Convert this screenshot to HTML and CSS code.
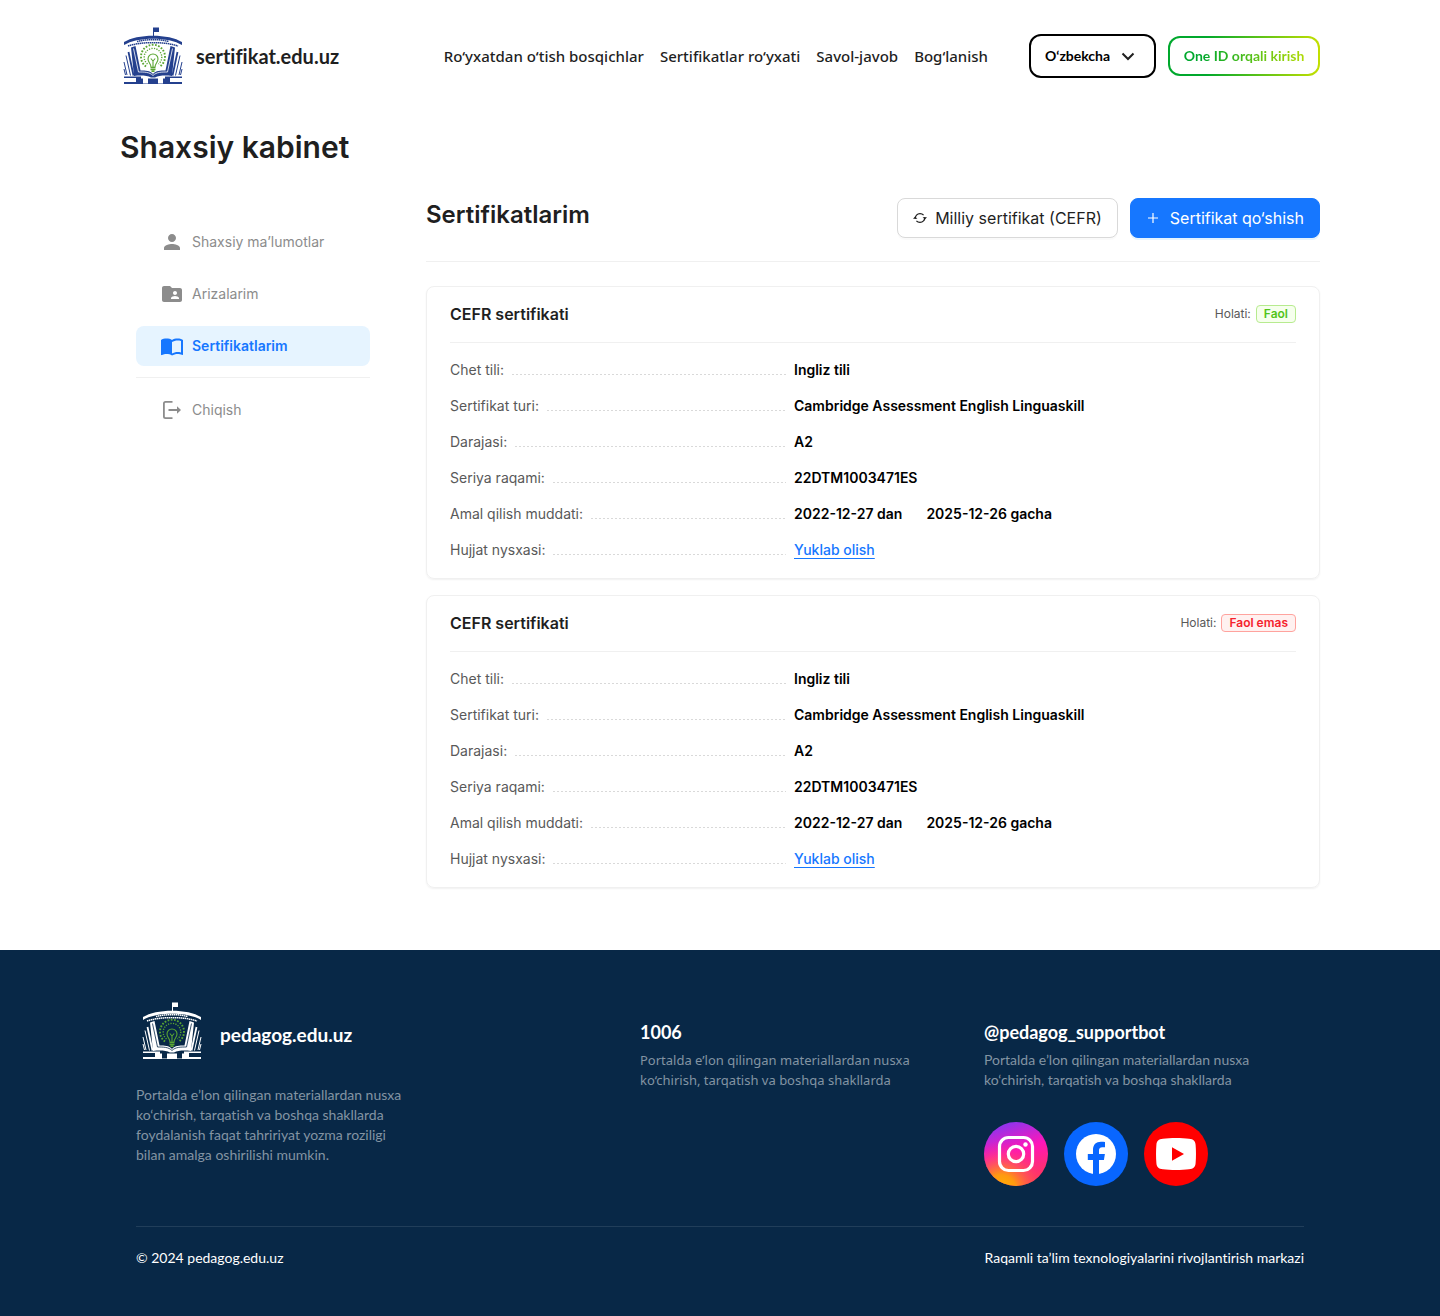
FILE: index.html
```
<!DOCTYPE html>
<html lang="uz">
<head>
<meta charset="utf-8">
<meta name="viewport" content="width=device-width, initial-scale=1">
<title>Shaxsiy kabinet – sertifikat.edu.uz</title>
<link rel="stylesheet" href="styles.css">
</head>
<body>
<svg class="sprite" aria-hidden="true">
  <symbol id="emblem" viewBox="0 0 60 60">
    <path fill="currentColor" d="M30 1.500h6v4.500h-5v4h-1z"/>
    <path fill="currentColor" d="M1 16C14 7.500 46 7.500 59 16v3C46 10.500 14 10.500 1 19z"/>
    <path fill="none" stroke="currentColor" stroke-width="1.500" stroke-dasharray="1.500 .5" d="M14 15.500C24 13 36 13 46 15.500M5 20C18 15.500 42 15.500 55 20"/>
    <path fill="currentColor" d="M8 21.500l4.500-1.500 5 24.500c5 0 9.500 0 12.500 3.500 3-3.500 7.500-3.500 12.500-3.500l5-24.500 4.500 1.500L49 50c-7-1-13-.5-17 1.500h-4C24 49.500 18 49 11 50z"/>
    <path fill="none" stroke="var(--paper)" stroke-width=".8" d="M10.500 22.500L15.500 46c6 0 11 0 14.500 3.500M49.500 22.500L44.500 46C38.500 46 33.500 46 30 49.500"/>
    <path fill="none" stroke="currentColor" stroke-width="1.800" d="M5.500 26l5 23.500M54.500 26l-5 23.500"/>
    <path fill="none" stroke="currentColor" stroke-width="1" d="M3 29.500l4.500 20M57 29.500l-4.500 20M1 36l3 13M59 36l-3 13M1 43l1.500 6M59 43l-1.500 6"/>
    <path fill="currentColor" d="M1 50.500h17v2h2v5h5v-5h10v5h5v-5h2v-2h17v1.500H47v4h12v2H1v-2h12v-4H1zM27 54h6v3.500h-6z"/>
    <g fill="none" stroke="#5aa532">
      <path stroke-width="1.900" stroke-dasharray="1.700 1.500" d="M23 40.500a12 12 0 1 1 14 0"/>
      <path stroke-width="1.400" stroke-dasharray="1.200 1.300" d="M24.500 38a8.800 8.800 0 1 1 11 0"/>
      <path stroke-width="1.100" d="M28 41c0-3.500-3-4.500-3-8a5 5 0 0 1 10 0c0 3.500-3 4.500-3 8M30 41v-7m0 1l-2.200-2.500M30 35l2.200-2.500"/>
      <path stroke-width="1.400" d="M27.500 41.500h5M27.500 43.500h5M28.500 45.300h3"/>
    </g>
  </symbol>
</svg>

<header class="header wrap">
  <a class="brand" href="#">
    <svg class="emblem" aria-hidden="true"><use href="#emblem"/></svg>
    <span class="brand-name">sertifikat.edu.uz</span>
  </a>
  <nav class="nav" aria-label="Asosiy menyu">
    <a href="#">Ro‘yxatdan o‘tish bosqichlar</a>
    <a href="#">Sertifikatlar ro‘yxati</a>
    <a href="#">Savol-javob</a>
    <a href="#">Bog‘lanish</a>
  </nav>
  <div class="header-actions">
    <div class="lang">
      <select class="lang-select" aria-label="Til">
        <option>O‘zbekcha</option>
      </select>
      <svg class="lang-chevron" viewBox="0 0 24 24" aria-hidden="true"><path d="M6.500 9.500l5.500 5.500 5.500-5.500" fill="none" stroke="currentColor" stroke-width="2"/></svg>
    </div>
    <button class="login" type="button"><span>One ID orqali kirish</span></button>
  </div>
</header>

<main class="wrap">
  <h1 class="page-title">Shaxsiy kabinet</h1>
  <div class="layout">
    <aside class="sidebar">
      <nav class="menu" aria-label="Kabinet">
        <a class="menu-item" href="#">
          <svg viewBox="0 0 24 24" aria-hidden="true"><path d="M12 12c2.210 0 4-1.790 4-4s-1.790-4-4-4-4 1.790-4 4 1.790 4 4 4zm0 2c-2.670 0-8 1.340-8 4v2h16v-2c0-2.660-5.330-4-8-4z"/></svg>
          Shaxsiy ma’lumotlar
        </a>
        <a class="menu-item" href="#">
          <svg viewBox="0 0 24 24" aria-hidden="true"><path d="M20 6h-8l-2-2H4c-1.100 0-2 .9-2 2v12c0 1.100.9 2 2 2h16c1.100 0 2-.9 2-2V8c0-1.100-.9-2-2-2zm-5 3c1.100 0 2 .9 2 2s-.9 2-2 2-2-.9-2-2 .9-2 2-2zm4 8h-8v-1c0-1.330 2.670-2 4-2s4 .67 4 2v1z"/></svg>
          Arizalarim
        </a>
        <a class="menu-item active" href="#" aria-current="page">
          <svg viewBox="0 0 24 24" aria-hidden="true"><path d="M21 5c-1.110-.35-2.330-.5-3.500-.5-1.950 0-4.050.4-5.500 1.500-1.450-1.100-3.550-1.500-5.500-1.500S2.450 4.900 1 6v14.650c0 .25.25.5.5.5.1 0 .15-.05.250-.05C3.100 20.450 5.050 20 6.500 20c1.950 0 4.050.4 5.500 1.500 1.350-.85 3.800-1.500 5.500-1.500 1.650 0 3.350.3 4.750 1.050.1.050.15.050.250.050.25 0 .5-.25.5-.5V6c-.6-.45-1.250-.75-2-1zm0 13.500c-1.100-.35-2.300-.5-3.500-.5-1.700 0-4.150.650-5.500 1.500V8c1.350-.85 3.800-1.500 5.500-1.500 1.200 0 2.400.15 3.500.5v11.500z"/></svg>
          Sertifikatlarim
        </a>
        <hr class="rule">
        <a class="menu-item" href="#">
          <svg viewBox="0 0 24 24" aria-hidden="true"><path d="M12.500 3.800H5.500c-1 0-1.600.6-1.600 1.600v13.200c0 1 .6 1.600 1.600 1.600h7M8.500 12H19" fill="none" stroke="currentColor" stroke-width="1.800"/><path d="M17 8.300l4 3.700-4 3.700z"/></svg>
          Chiqish
        </a>
      </nav>
    </aside>

    <section class="content">
      <div class="content-head">
        <h2 class="content-title">Sertifikatlarim</h2>
        <div class="buttons">
          <button class="btn" type="button">
            <svg viewBox="0 0 14 14" aria-hidden="true"><path d="M2.300 7.800C2 4.800 4.200 2.600 7 2.600c1.500 0 2.700.5 3.600 1.500M11.700 6.200c.3 3-1.900 5.200-4.700 5.200-1.500 0-2.700-.5-3.600-1.500" fill="none" stroke="currentColor" stroke-width="1.200"/><path fill="currentColor" d="M0 7.800L2.100 5.600l2.300 2.200zM14 6.200l-2.100 2.200-2.300-2.200z"/></svg>
            Milliy sertifikat (CEFR)
          </button>
          <button class="btn primary" type="button">
            <svg viewBox="0 0 14 14" aria-hidden="true"><path d="M7 2v10M2 7h10" stroke="currentColor" stroke-width="1.200"/></svg>
            Sertifikat qo‘shish
          </button>
        </div>
      </div>

      <article class="card">
        <header class="card-head">
          <h3 class="card-title">CEFR sertifikati</h3>
          <p class="status">Holati: <span class="tag ok">Faol</span></p>
        </header>
        <dl class="fields">
          <div class="field"><dt>Chet tili:</dt><dd>Ingliz tili</dd></div>
          <div class="field"><dt>Sertifikat turi:</dt><dd>Cambridge Assessment English Linguaskill</dd></div>
          <div class="field"><dt>Darajasi:</dt><dd>A2</dd></div>
          <div class="field"><dt>Seriya raqami:</dt><dd>22DTM1003471ES</dd></div>
          <div class="field"><dt>Amal qilish muddati:</dt><dd><span>2022-12-27 dan</span><span>2025-12-26 gacha</span></dd></div>
          <div class="field"><dt>Hujjat nysxasi:</dt><dd><a class="download" href="#">Yuklab olish</a></dd></div>
        </dl>
      </article>

      <article class="card">
        <header class="card-head">
          <h3 class="card-title">CEFR sertifikati</h3>
          <p class="status">Holati: <span class="tag off">Faol emas</span></p>
        </header>
        <dl class="fields">
          <div class="field"><dt>Chet tili:</dt><dd>Ingliz tili</dd></div>
          <div class="field"><dt>Sertifikat turi:</dt><dd>Cambridge Assessment English Linguaskill</dd></div>
          <div class="field"><dt>Darajasi:</dt><dd>A2</dd></div>
          <div class="field"><dt>Seriya raqami:</dt><dd>22DTM1003471ES</dd></div>
          <div class="field"><dt>Amal qilish muddati:</dt><dd><span>2022-12-27 dan</span><span>2025-12-26 gacha</span></dd></div>
          <div class="field"><dt>Hujjat nysxasi:</dt><dd><a class="download" href="#">Yuklab olish</a></dd></div>
        </dl>
      </article>
    </section>
  </div>
</main>

<footer class="footer">
  <div class="footer-inner">
    <div class="footer-cols">
      <div class="footer-about">
        <a class="footer-brand" href="#">
          <svg class="emblem" aria-hidden="true"><use href="#emblem"/></svg>
          <span class="footer-name">pedagog.edu.uz</span>
        </a>
        <p class="note">Portalda e’lon qilingan materiallardan nusxa ko‘chirish, tarqatish va boshqa shakllarda foydalanish faqat tahririyat yozma roziligi bilan amalga oshirilishi mumkin.</p>
      </div>
      <div class="footer-col">
        <a class="contact" href="tel:1006">1006</a>
        <p class="note phone-note">Portalda e’lon qilingan materiallardan nusxa ko‘chirish, tarqatish va boshqa shakllarda</p>
      </div>
      <div class="footer-col">
        <a class="contact" href="#">@pedagog_supportbot</a>
        <p class="note">Portalda e’lon qilingan materiallardan nusxa ko‘chirish, tarqatish va boshqa shakllarda</p>
        <div class="socials">
          <a href="#" aria-label="Instagram">
            <svg viewBox="0 0 64 64" aria-hidden="true">
              <defs>
                <linearGradient id="ig-base" x1="0.350" y1="0" x2="0.650" y2="1"><stop offset="0" stop-color="#8a35f0"/><stop offset=".45" stop-color="#ff16b8"/><stop offset="1" stop-color="#ff3a50"/></linearGradient>
                <radialGradient id="ig-glow" cx=".27" cy="1.050" r=".75"><stop offset="0" stop-color="#ffb400"/><stop offset=".3" stop-color="#ff9a10"/><stop offset="1" stop-color="#ff1d90" stop-opacity="0"/></radialGradient>
              </defs>
              <circle cx="32" cy="32" r="32" fill="url(#ig-base)"/><circle cx="32" cy="32" r="32" fill="url(#ig-glow)"/>
              <rect x="15.500" y="15.500" width="33" height="33" rx="9" fill="none" stroke="#fff" stroke-width="3.200"/>
              <circle cx="32" cy="32" r="7.700" fill="none" stroke="#fff" stroke-width="3.200"/><circle cx="41.500" cy="22.500" r="2.200" fill="#fff"/>
            </svg>
          </a>
          <a href="#" aria-label="Facebook">
            <svg viewBox="0 0 64 64" aria-hidden="true"><circle cx="32" cy="32" r="32" fill="#0866ff"/><circle cx="32" cy="32" r="20" fill="#fff"/><path fill="#0866ff" d="M29 52.500V38h-5.200v-6H29v-4c0-5.600 3-8.300 8-8.300 1.500 0 3 .2 4 .4v5.100h-2.600c-2.700 0-3.400 1.300-3.400 3.300V32h5.900l-1 6H35v14.500z"/></svg>
          </a>
          <a href="#" aria-label="YouTube">
            <svg viewBox="0 0 64 64" aria-hidden="true"><circle cx="32" cy="32" r="32" fill="#f00"/><path fill="#fff" d="M19 16.700c7-.9 19-.9 26 0 4.500.5 6.200 2 6.600 6 .5 6 .5 12.600 0 18.600-.4 4-2.100 5.500-6.600 6-7 .9-19 .9-26 0-4.500-.5-6.200-2-6.600-6-.5-6-.5-12.600 0-18.600.4-4 2.100-5.500 6.600-6z"/><path fill="#f00" d="M28 25.300v13.400L40 32z"/></svg>
          </a>
        </div>
      </div>
    </div>
    <div class="footer-bottom">
      <p>© 2024 pedagog.edu.uz</p>
      <p>Raqamli ta’lim texnologiyalarini rivojlantirish markazi</p>
    </div>
  </div>
</footer>
</body>
</html>
```
FILE: styles.css
```
* { box-sizing: border-box; }

body {
  margin: 0;
  font-family: Inter, "Liberation Sans", sans-serif;
  font-size: 14px;
  line-height: 20px;
  color: #1f1f1f;
  background: #fff;
}

h1, h2, h3, p, dl, dd { margin: 0; }
h1, h2, h3 { font-weight: 600; }
a { color: inherit; text-decoration: none; }
button, select { font: inherit; cursor: pointer; }
svg { display: block; flex: none; }
.sprite { width: 0; height: 0; position: absolute; }

.wrap {
  max-width: 1240px;
  margin: 0 auto;
  padding: 0 20px;
}

/* Header */
.header, .footer {
  font-family: Lato, "Open Sans", sans-serif;
  font-variant-ligatures: none;
}
.header {
  display: flex;
  align-items: center;
  gap: 41px;
  height: 112px;
}
.brand {
  display: flex;
  align-items: center;
  gap: 13px;
  padding-left: 3px;
  margin-right: auto;
  color: #24408e;
  --paper: #fff;
}
.emblem { width: 60px; height: 60px; }
.brand-name {
  font-size: 20px;
  font-weight: 700;
  color: #1f1f1f;
}
.nav {
  display: flex;
  gap: 16px;
  font-family: "Noto Sans", "Open Sans", sans-serif;
  font-size: 15px;
  font-weight: 500;
}
.header-actions { display: flex; align-items: center; gap: 12px; }
.lang { display: grid; align-items: center; width: 127px; }
.lang-select {
  grid-area: 1 / 1;
  height: 44px;
  padding: 0 14px;
  border: 2px solid #000;
  border-radius: 12px;
  background: #fff;
  color: #000;
  font-weight: 700;
  appearance: none;
}
.lang-chevron {
  grid-area: 1 / 1;
  justify-self: end;
  width: 24px;
  height: 24px;
  margin-right: 16px;
  pointer-events: none;
}
.login {
  width: 152px;
  height: 40px;
  padding: 0;
  border: 2px solid transparent;
  border-radius: 12px;
  background:
    linear-gradient(#fff, #fff) padding-box,
    linear-gradient(90deg, #00a82d 25%, #c4e000) border-box;
  font-weight: 700;
}
.login span {
  background: linear-gradient(90deg, #00a82d 15%, #c4e000 110%);
  background-clip: text;
  color: transparent;
}

/* Cabinet */
.page-title {
  padding-top: 15px;
  font-size: 30px;
  line-height: 40px;
}
.layout {
  display: grid;
  grid-template-columns: 266px minmax(0, 1fr);
  gap: 40px;
  padding: 31px 0 62px;
}
.menu {
  display: flex;
  flex-direction: column;
  gap: 12px;
  padding: 24px 16px 0;
}
.menu-item {
  display: flex;
  align-items: center;
  gap: 8px;
  height: 40px;
  padding: 0 24px;
  border-radius: 8px;
  color: #8c8c8c;
}
.menu-item svg { width: 24px; height: 24px; fill: currentColor; }
.menu-item.active {
  background: #e6f4ff;
  color: #1677ff;
  font-weight: 600;
}
.rule {
  width: 100%;
  height: 1px;
  margin: -1px 0 0;
  border: 0;
  background: #f0f0f0;
}

.content { display: grid; gap: 16px; }
.content-head {
  display: flex;
  justify-content: space-between;
  align-items: start;
  padding-bottom: 23px;
  margin-bottom: 8px;
  border-bottom: 1px solid #f0f0f0;
}
.content-title { font-size: 24px; line-height: 34px; }
.buttons { display: flex; gap: 12px; }
.btn {
  display: flex;
  align-items: center;
  gap: 8px;
  height: 40px;
  padding: 0 15px;
  border: 1px solid #d9d9d9;
  border-radius: 8px;
  background: #fff;
  box-shadow: 0 2px 0 rgba(0, 0, 0, .02);
  color: #1f1f1f;
  font-size: 16px;
}
.btn svg { width: 14px; height: 14px; }
.btn.primary {
  gap: 10px;
  border-color: #1677ff;
  background: #1677ff;
  box-shadow: 0 2px 0 rgba(5, 145, 255, .1);
  color: #fff;
}

.card {
  padding: 0 23px 18px;
  border: 1px solid #f0f0f0;
  border-radius: 8px;
  box-shadow: 0 1px 2px rgba(0, 0, 0, .06);
}
.card-head {
  display: flex;
  justify-content: space-between;
  align-items: center;
  height: 56px;
  padding-bottom: 2px;
  border-bottom: 1px solid #f0f0f0;
}
.card-title { font-size: 16px; line-height: 24px; }
.status {
  display: flex;
  align-items: center;
  gap: 5px;
  font-size: 12px;
  color: #595959;
}
.tag {
  padding: 0 7px;
  border: 1px solid;
  border-radius: 4px;
  line-height: 16px;
  font-weight: 600;
}
.ok { border-color: #b7eb8f; background: #f6ffed; color: #52c41a; }
.off { border-color: #ffa39e; background: #fff1f0; color: #f5222d; }
.fields { display: grid; gap: 16px; padding-top: 17px; }
.field {
  display: grid;
  grid-template-columns: 336px minmax(0, 1fr);
  gap: 8px;
}
.field dt {
  display: flex;
  gap: 8px;
  color: #595959;
}
.field dt::after {
  content: "";
  flex: 1;
  height: 15px;
  background: repeating-linear-gradient(90deg, #d9d9d9 0 2px, transparent 2px 4px) bottom / 100% 1px no-repeat;
}
.field dd {
  display: flex;
  gap: 24px;
  font-weight: 600;
  color: #000;
}
.download {
  font-weight: 500;
  color: #1677ff;
  text-decoration: underline 1px;
  text-decoration-skip-ink: none;
  text-underline-offset: 3px;
}

/* Footer */
.footer { background: #082847; color: #fff; }
.footer-inner {
  max-width: 1208px;
  margin: 0 auto;
  padding: 40px 20px 48px;
}
.footer-cols {
  display: grid;
  grid-template-columns: 504fr 344fr 320fr;
  padding-bottom: 40px;
  border-bottom: 1px solid #213e5a;
}
.footer-brand {
  display: flex;
  align-items: center;
  gap: 18px;
  height: 82px;
  padding-left: 6px;
  --paper: #082847;
}
.footer-name {
  padding-top: 8px;
  font-size: 19px;
  font-weight: 700;
}
.footer-about .note { margin-top: 13px; }
.note { max-width: 280px; color: #8394a3; }
.phone-note {
  font-family: "Noto Sans", "Open Sans", sans-serif;
  font-size: 13px;
}
.footer-col { padding-top: 30px; }
.contact {
  display: block;
  margin-bottom: 6px;
  font-size: 18px;
  line-height: 24px;
  font-weight: 700;
}
.socials { display: flex; gap: 16px; margin-top: 32px; }
.socials svg { width: 64px; height: 64px; }
.footer-bottom {
  display: flex;
  justify-content: space-between;
  gap: 16px;
  padding-top: 21px;
}
```
